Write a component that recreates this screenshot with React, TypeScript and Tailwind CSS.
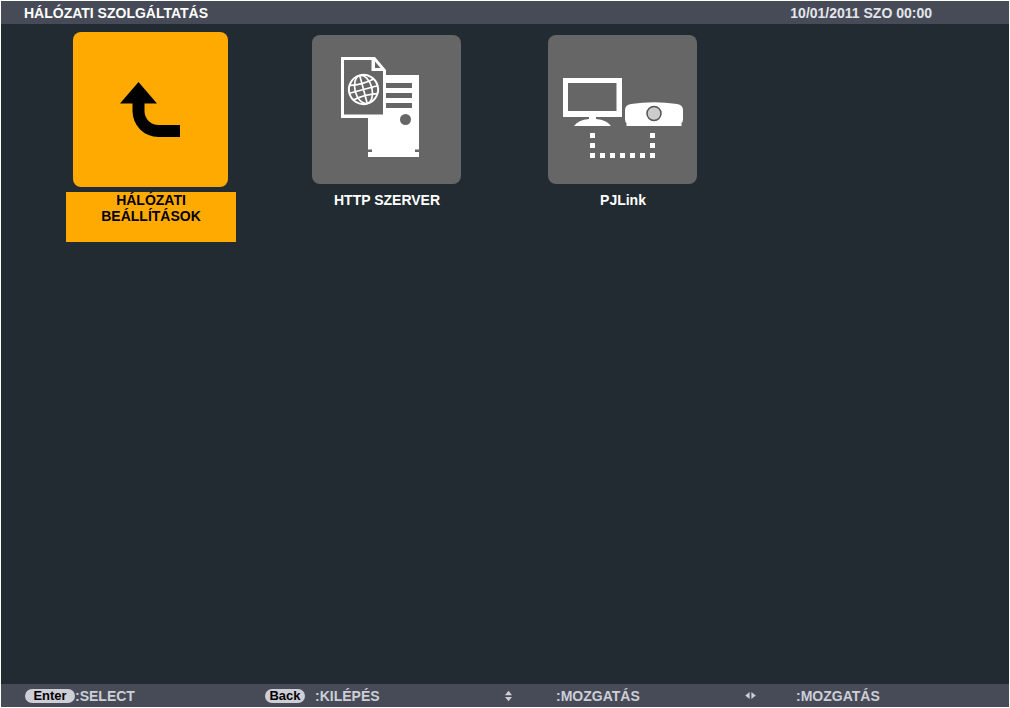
import React from 'react';

interface TileProps {
  label: string;
  selected?: boolean;
  children: React.ReactNode;
}

function Tile({ label, selected = false, children }: TileProps) {
  return (
    <button type="button" className="flex w-[236px] flex-col items-center gap-[5px]">
      <span className="flex h-[155px] items-center pr-px">
        <span
          className={
            selected
              ? 'block size-[155px] rounded-lg bg-[#ffaa00] text-black'
              : 'block size-[149px] rounded-lg bg-[#666666] text-white'
          }
        >
          {children}
        </span>
      </span>
      <span
        className={
          selected
            ? 'block h-[50px] w-[170px] bg-[#ffaa00] px-6 text-black'
            : 'block h-[50px] w-[170px] px-6 text-white'
        }
      >
        {label}
      </span>
    </button>
  );
}

function BackIcon() {
  return (
    <svg viewBox="0 0 155 155" className="size-full" fill="currentColor" aria-hidden="true">
      <path d="M65.5 50 L84 71.5 H71.5 V79 A14 14 0 0 0 85.5 93 H107 V105 H85.5 A26 26 0 0 1 59.5 79 V71.5 H47 Z" />
    </svg>
  );
}

function HttpServerIcon() {
  return (
    <svg viewBox="0 0 149 149" className="size-full" aria-hidden="true">
      <path d="M56 40 H107 V122 H56 Z" fill="white" />
      <g fill="#666666">
        <path d="M70 48 H100 V53 H70 Z M70 58 H100 V63 H70 Z M70 68 H100 V73 H70 Z" />
        <circle cx="93.5" cy="84.5" r="5.5" />
        <path d="M56 114.5 H60 V117 H56 Z M103 114.5 H107 V117 H103 Z" />
      </g>
      <path d="M29 22 H63 L74 35 V83 H29 Z" fill="white" />
      <path d="M32 25 H59.5 V36 H71 V79.5 H32 Z" fill="#666666" />
      <path d="M63 26.5 L68.5 33 H63 Z" fill="#666666" />
      <g fill="none" stroke="white" strokeWidth="1.7" transform="rotate(-15 51.5 54.5)">
        <circle cx="51.5" cy="54.5" r="14.6" strokeWidth="2" />
        <ellipse cx="51.5" cy="54.5" rx="8.5" ry="14.5" />
        <path d="M51.5 40 V69 M37 54.5 H66 M39.5 47 Q51.5 49.5 63.5 47 M39.5 62 Q51.5 59.5 63.5 62" />
      </g>
    </svg>
  );
}

function PjLinkIcon() {
  return (
    <svg viewBox="0 0 149 149" className="size-full" fill="white" aria-hidden="true">
      <path fillRule="evenodd" d="M15 43 H74 V82 H15 Z M20 48 V76 H68.5 V48 Z" />
      <path d="M41 81 H48 V84 Q59 85 63 91 H26 Q30 85 41 84 Z" />
      <path d="M77 75 Q77 70 83 69 Q106 65.5 129 69 Q135 70 135 75 V84 Q135 87 133.5 88 V91 H78.5 V88 Q77 87 77 84 Z" />
      <circle cx="106" cy="78.5" r="7" fill="#cccccc" stroke="#555555" strokeWidth="1.5" />
      <path
        d="M42 98 h5 v5 h-5 Z M42 108 h5 v5 h-5 Z M42 118 h5 v5 h-5 Z M52 118 h5 v5 h-5 Z M62 118 h5 v5 h-5 Z M72 118 h5 v5 h-5 Z M82 118 h5 v5 h-5 Z M92 118 h5 v5 h-5 Z M102 118 h5 v5 h-5 Z M102 108 h5 v5 h-5 Z M102 98 h5 v5 h-5 Z"
      />
    </svg>
  );
}

function KeyCap({ children }: { children: React.ReactNode }) {
  return (
    <kbd className="block rounded-full bg-[#cdced6] px-1 text-center font-[inherit] text-[13px] leading-[14px] text-black">
      {children}
    </kbd>
  );
}

export default function App() {
  return (
    <div className="flex min-h-screen flex-col border border-white bg-[#232b32] font-['Liberation_Sans',Arial,sans-serif] text-sm leading-4 font-bold">
      <header className="flex h-[23px] items-center justify-between bg-[#474b57] pr-[77px] pl-[23px] text-white">
        <h1>HÁLÓZATI SZOLGÁLTATÁS</h1>
        <time className="text-[#e4e5ec]">10/01/2011 SZO 00:00</time>
      </header>

      <main className="flex flex-1 flex-wrap content-start px-8 pt-2">
        <Tile label="HÁLÓZATI BEÁLLÍTÁSOK" selected>
          <BackIcon />
        </Tile>
        <Tile label="HTTP SZERVER">
          <HttpServerIcon />
        </Tile>
        <Tile label="PJLink">
          <PjLinkIcon />
        </Tile>
      </main>

      <footer className="flex h-[23px] items-center bg-[#474b57] pl-6 text-[#cdced6]">
        <div className="flex w-60 items-center">
          <span className="w-[50px]">
            <KeyCap>Enter</KeyCap>
          </span>
          <span>:SELECT</span>
        </div>
        <div className="flex w-60 items-center">
          <span className="mr-[10px] w-10">
            <KeyCap>Back</KeyCap>
          </span>
          <span>:KILÉPÉS</span>
        </div>
        <div className="flex w-60 items-center">
          <svg viewBox="0 0 8 12" className="mr-[44px] h-3 w-[7px]" fill="currentColor" aria-hidden="true">
            <path d="M4 0 L8 5 H0 Z M0 7 H8 L4 12 Z" />
          </svg>
          <span>:MOZGATÁS</span>
        </div>
        <div className="flex items-center">
          <svg viewBox="0 0 12 8" className="mr-[40px] h-[7px] w-[11px]" fill="currentColor" aria-hidden="true">
            <path d="M5 0 V8 L0 4 Z M7 0 L12 4 L7 8 Z" />
          </svg>
          <span>:MOZGATÁS</span>
        </div>
      </footer>
    </div>
  );
}
